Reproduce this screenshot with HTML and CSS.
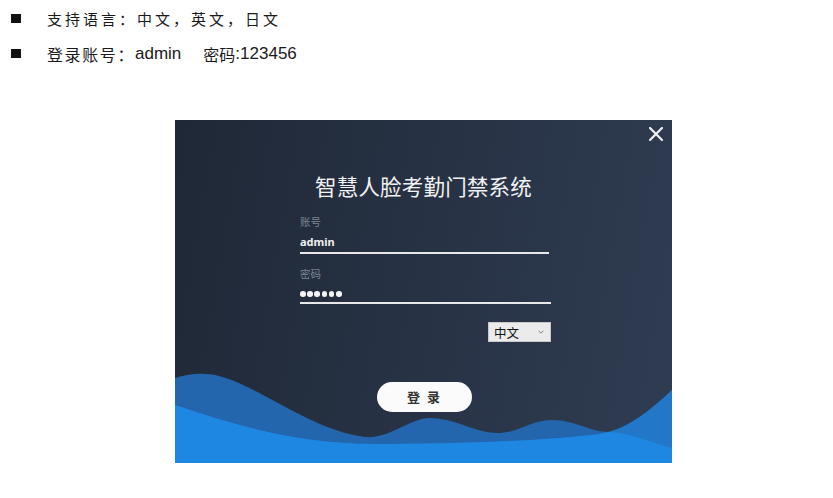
FILE: index.html
```html
<!DOCTYPE html>
<html lang="zh">
<head>
<meta charset="utf-8">
<title>智慧人脸考勤门禁系统</title>
<link rel="stylesheet" href="styles.css">
</head>
<body>
<ul class="notes">
  <li class="note"><span class="bullet"></span><span class="note-text line1">支持语言：中文，英文，日文</span></li>
  <li class="note"><span class="bullet"></span><span class="note-text line2"><span class="cjk">登录账号：</span><span class="latin">admin</span><span class="cjk pwd-label">密码</span><span class="latin">:123456</span></span></li>
</ul>

<div class="shot">
  <svg class="waves" viewBox="0 0 497 343" preserveAspectRatio="none" aria-hidden="true">
    <defs>
      <clipPath id="clip-l2">
        <path d="M0,285 C60,305 120,324 200,324 C290,324 380,320 425,314 C455,308 475,290 497,270 L497,343 L0,343 Z"/>
      </clipPath>
    </defs>
    <path fill="#2366ad" d="M0,258 C10,255 20,253 30,254 C70,254 130,310 190,317 C215,319 235,298 255,298 C280,298 300,313 322,313 C345,313 355,300 377,300 C400,300 415,312 435,312 C460,314 480,324 497,328 L497,343 L0,343 Z"/>
    <path fill="#2277c9" d="M0,285 C60,305 120,324 200,324 C290,324 380,320 425,314 C455,308 475,290 497,270 L497,343 L0,343 Z"/>
    <path fill="#1e87e2" clip-path="url(#clip-l2)" d="M0,258 C10,255 20,253 30,254 C70,254 130,310 190,317 C215,319 235,298 255,298 C280,298 300,313 322,313 C345,313 355,300 377,300 C400,300 415,312 435,312 C460,314 480,324 497,328 L497,343 L0,343 Z"/>
  </svg>

  <svg class="close" viewBox="0 0 14 14" aria-hidden="true">
    <path d="M1,1 L13,13 M13,1 L1,13" stroke="#f2f2f2" stroke-width="2.2" stroke-linecap="square" fill="none"/>
  </svg>

  <div class="content">
    <h1 class="title">智慧人脸考勤门禁系统</h1>
    <div class="form">
      <div class="field-label">账号</div>
      <div class="field-value">admin</div>
      <div class="underline"></div>
      <div class="field-label label-gap">密码</div>
      <div class="dots"><span></span><span></span><span></span><span></span><span></span><span></span></div>
      <div class="underline under2"></div>
      <div class="lang-row">
        <div class="lang-select"><span>中文</span><svg class="chev" viewBox="0 0 6 4"><path d="M0.5,0.8 L3,3.2 L5.5,0.8" stroke="#777" stroke-width="0.9" fill="none"/></svg></div>
      </div>
    </div>
    <div class="btn">登 录</div>
  </div>
</div>
</body>
</html>
```
FILE: styles.css
```css
html, body {
  margin: 0;
  padding: 0;
  background: #ffffff;
}

body {
  width: 833px;
  height: 498px;
  overflow: hidden;
  font-family: "Noto Sans CJK SC", "Noto Sans", sans-serif;
}

.notes {
  list-style: none;
  margin: 0;
  padding: 1px 0 0 0;
}

.note {
  display: flex;
  align-items: center;
  height: 35px;
  color: #1a1a1a;
}

.bullet {
  width: 10px;
  height: 9px;
  background: #111;
  margin-left: 11px;
  margin-right: 26px;
  flex: none;
}

.line1 {
  font-family: "Noto Sans CJK SC", sans-serif;
  font-size: 15px;
  letter-spacing: 3px;
  font-weight: 400;
}

.line2 {
  display: flex;
  align-items: center;
}

.line2 .cjk {
  font-family: "Noto Sans CJK SC", sans-serif;
  font-size: 16px;
  letter-spacing: 1.6px;
  font-weight: 400;
}

.line2 .latin {
  font-family: "Liberation Sans", Arial, sans-serif;
  font-size: 17px;
}

.line2 .pwd-label {
  margin-left: 22px;
  letter-spacing: 0;
}

.shot {
  position: relative;
  width: 497px;
  height: 343px;
  margin: 49px 0 0 175px;
  background: linear-gradient(100deg, #1f2836 0%, #273245 50%, #303c52 100%);
  overflow: hidden;
}

.waves {
  position: absolute;
  left: 0;
  top: 0;
  width: 497px;
  height: 343px;
}

.close {
  position: absolute;
  left: 474px;
  top: 7px;
  width: 14px;
  height: 14px;
}

.content {
  position: relative;
  display: flex;
  flex-direction: column;
  align-items: center;
  padding-top: 52px;
}

.title {
  margin: 0;
  font-size: 21.5px;
  line-height: 28px;
  font-weight: 400;
  color: #f2f2f2;
  letter-spacing: 0.2px;
}

.form {
  width: 251px;
  margin-left: 4px;
  display: flex;
  flex-direction: column;
}

.field-label {
  margin-top: 14px;
  font-size: 10.5px;
  line-height: 16px;
  color: #7d8695;
}

.label-gap {
  margin-top: 12px;
}

.field-value {
  margin-top: 4px;
  font-family: "Noto Sans", sans-serif;
  font-size: 11px;
  font-weight: 700;
  line-height: 16px;
  color: #f0f0f0;
}

.underline {
  margin-top: 2px;
  width: 249px;
  height: 2px;
  background: #e8e8e8;
}

.under2 {
  margin-top: 0;
  width: 251px;
}

.dots {
  margin-top: 4px;
  height: 16px;
  display: flex;
  align-items: center;
  gap: 1.6px;
}

.dots span {
  width: 5.6px;
  height: 5.6px;
  border-radius: 50%;
  background: #f4f4f4;
}

.lang-row {
  margin-top: 18px;
  display: flex;
  justify-content: flex-end;
}

.lang-select {
  height: 18px;
  border: 1px solid #c9c9c9;
  background: #ebebeb;
  display: flex;
  align-items: center;
  justify-content: space-between;
  padding: 0 6px 0 5px;
  box-sizing: content-box;
  width: 50px;
  font-size: 12.5px;
  color: #111;
}

.chev {
  width: 6px;
  height: 4px;
}

.btn {
  margin-top: 40px;
  margin-left: 2px;
  width: 95px;
  height: 30px;
  border-radius: 15px;
  background: #fbfbfb;
  color: #333;
  font-size: 13px;
  font-weight: 700;
  letter-spacing: 2px;
  display: flex;
  align-items: center;
  justify-content: center;
  line-height: 30px;
}
```
